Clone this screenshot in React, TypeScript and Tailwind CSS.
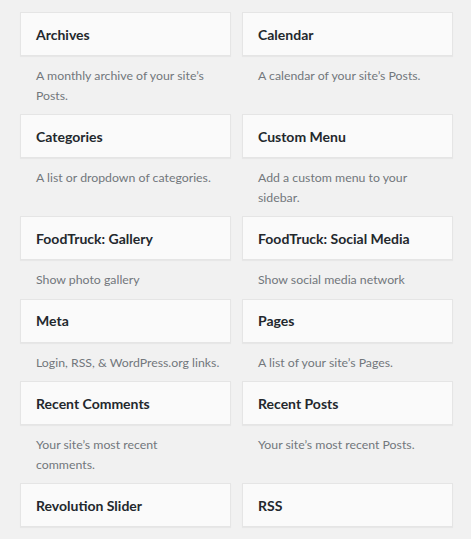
import React from "react";

const widgets: { title: string; desc: string }[] = [
  { title: "Archives", desc: "A monthly archive of your site\u2019s Posts." },
  { title: "Calendar", desc: "A calendar of your site\u2019s Posts." },
  { title: "Categories", desc: "A list or dropdown of categories." },
  { title: "Custom Menu", desc: "Add a custom menu to your sidebar." },
  { title: "FoodTruck: Gallery", desc: "Show photo gallery" },
  { title: "FoodTruck: Social Media", desc: "Show social media network" },
  { title: "Meta", desc: "Login, RSS, & WordPress.org links." },
  { title: "Pages", desc: "A list of your site\u2019s Pages." },
  { title: "Recent Comments", desc: "Your site\u2019s most recent\ncomments." },
  { title: "Recent Posts", desc: "Your site\u2019s most recent Posts." },
  { title: "Revolution Slider", desc: "" },
  { title: "RSS", desc: "" },
];

export default function App() {
  return (
    <div
      className="w-[471px] h-[539px] overflow-hidden bg-[#f1f1f1] pl-[20px] pr-[18px] pt-[12px]"
      style={{ fontFamily: 'Lato, "Noto Sans", sans-serif' }}
    >
      <div className="grid grid-cols-2 gap-x-[11px]">
        {widgets.map((w) => (
          <div key={w.title} className="flex flex-col">
            <div className="h-[44px] flex items-center border border-[#e5e5e5] bg-[#fafafa] shadow-[0_1px_1px_rgba(0,0,0,0.04)] px-[15px]">
              <span className="text-[14px] font-bold text-[#23282d]">{w.title}</span>
            </div>
            <div className="pt-[10px] pb-[9px] pl-[16px] pr-[8px] text-[12.3px] leading-[19.5px] text-[#72777c] whitespace-pre-line">
              {w.desc}
            </div>
          </div>
        ))}
      </div>
    </div>
  );
}
